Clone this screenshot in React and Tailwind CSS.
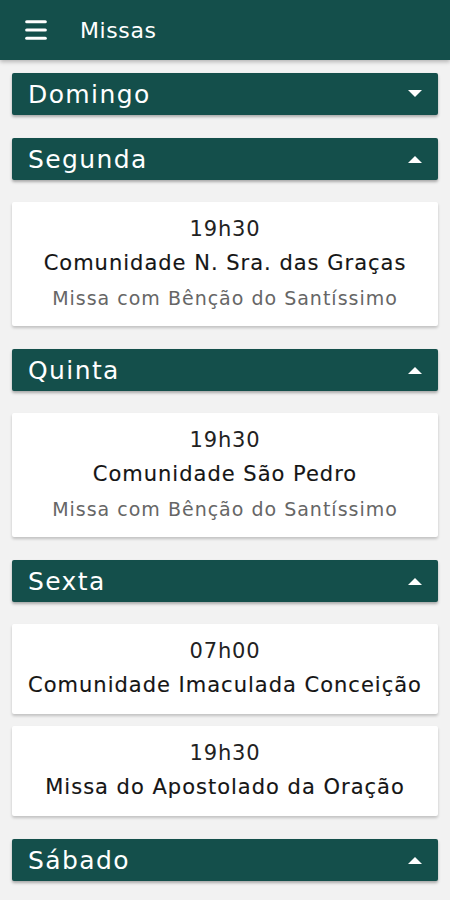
import { Menu } from 'lucide-react';

const days = [
  { name: 'Domingo', open: false, items: [] },
  {
    name: 'Segunda',
    open: true,
    items: [{ time: '19h30', place: 'Comunidade N. Sra. das Graças', note: 'Missa com Bênção do Santíssimo' }],
  },
  {
    name: 'Quinta',
    open: true,
    items: [{ time: '19h30', place: 'Comunidade São Pedro', note: 'Missa com Bênção do Santíssimo' }],
  },
  {
    name: 'Sexta',
    open: true,
    items: [
      { time: '07h00', place: 'Comunidade Imaculada Conceição' },
      { time: '19h30', place: 'Missa do Apostolado da Oração' },
    ],
  },
  { name: 'Sábado', open: true, items: [] },
];

function Caret({ up }) {
  return (
    <svg width="16" height="10" viewBox="0 0 16 10" className="mr-[3px]">
      {up ? <path d="M1 9 L8 2 L15 9 Z" fill="#fff" /> : <path d="M1 1 L8 8 L15 1 Z" fill="#fff" />}
    </svg>
  );
}

function DayHeader({ name, open }) {
  return (
    <div className="h-[42px] bg-[#144f4b] flex items-center justify-between pl-[16px] pr-[12px] shadow-[0_2px_3px_rgba(0,0,0,0.3)] rounded-[2px]">
      <span className="text-white text-[25px] tracking-[1.4px] leading-none">{name}</span>
      <Caret up={open} />
    </div>
  );
}

function MassCard({ time, place, note }) {
  return (
    <div className="bg-white shadow-[0_2px_3px_rgba(0,0,0,0.2)] rounded-[2px] flex flex-col items-center pt-[11px] pb-[11px]">
      <div className="h-[34px] flex items-center text-[21px] tracking-[0.8px] text-[#222]">{time}</div>
      <div className="h-[34px] flex items-center text-[21px] tracking-[1px] text-[#151515] [-webkit-text-stroke:0.15px_#151515] whitespace-nowrap">{place}</div>
      {note && <div className="h-[34px] flex items-center text-[19px] tracking-[1px] text-[#666] whitespace-nowrap">{note}</div>}
    </div>
  );
}

export default function App() {
  return (
    <div className="w-[450px] h-[900px] overflow-hidden bg-[#f2f2f2]" style={{ fontFamily: '"DejaVu Sans", "Open Sans", sans-serif' }}>
      <header className="h-[60px] bg-[#144f4b] flex items-center shadow-[0_2px_4px_rgba(0,0,0,0.25)]">
        <Menu size={28} strokeWidth={2.6} className="text-white ml-[22px]" />
        <span className="text-white text-[22px] ml-[30px] tracking-[0.6px]">Missas</span>
      </header>
      <div className="px-[12px] pt-[13px] flex flex-col gap-[23px]">
        {days.map((d) => (
          <section key={d.name} className="flex flex-col">
            <DayHeader name={d.name} open={d.open} />
            {d.items.length > 0 && (
              <div className="flex flex-col gap-[12px] mt-[22px]">
                {d.items.map((it, i) => (
                  <MassCard key={i} {...it} />
                ))}
              </div>
            )}
          </section>
        ))}
      </div>
    </div>
  );
}
